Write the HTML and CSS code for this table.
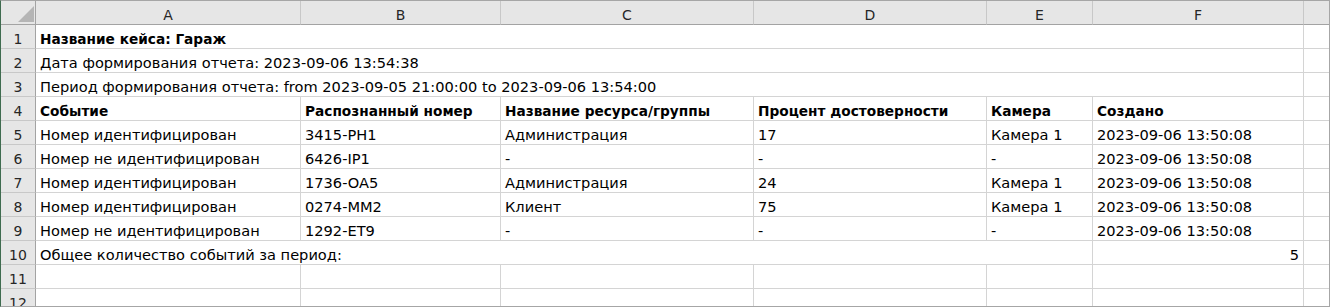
FILE: index.html
```html
<!DOCTYPE html>
<html lang="ru">
<head>
<meta charset="utf-8">
<title>Отчет</title>
<link rel="stylesheet" href="styles.css">
</head>
<body>
<div class="sheet">
  <div class="grid">
    <div class="hd corner"><span class="tri"></span></div>
    <div class="hd col">A</div>
    <div class="hd col">B</div>
    <div class="hd col">C</div>
    <div class="hd col">D</div>
    <div class="hd col">E</div>
    <div class="hd col">F</div>
    <div class="hd col last"></div>

    <div class="rn">1</div>
    <div class="c span6 b">Название кейса: Гараж</div>
    <div class="c last"></div>

    <div class="rn">2</div>
    <div class="c span6">Дата формирования отчета: 2023-09-06 13:54:38</div>
    <div class="c last"></div>

    <div class="rn">3</div>
    <div class="c span6">Период формирования отчета: from 2023-09-05 21:00:00 to 2023-09-06 13:54:00</div>
    <div class="c last"></div>

    <div class="rn">4</div>
    <div class="c b">Событие</div>
    <div class="c b">Распознанный номер</div>
    <div class="c b">Название ресурса/группы</div>
    <div class="c b">Процент достоверности</div>
    <div class="c b">Камера</div>
    <div class="c b">Создано</div>
    <div class="c last"></div>

    <div class="rn">5</div>
    <div class="c">Номер идентифицирован</div>
    <div class="c">3415-PH1</div>
    <div class="c">Администрация</div>
    <div class="c">17</div>
    <div class="c">Камера 1</div>
    <div class="c">2023-09-06 13:50:08</div>
    <div class="c last"></div>

    <div class="rn">6</div>
    <div class="c">Номер не идентифицирован</div>
    <div class="c">6426-IP1</div>
    <div class="c">-</div>
    <div class="c">-</div>
    <div class="c">-</div>
    <div class="c">2023-09-06 13:50:08</div>
    <div class="c last"></div>

    <div class="rn">7</div>
    <div class="c">Номер идентифицирован</div>
    <div class="c">1736-OA5</div>
    <div class="c">Администрация</div>
    <div class="c">24</div>
    <div class="c">Камера 1</div>
    <div class="c">2023-09-06 13:50:08</div>
    <div class="c last"></div>

    <div class="rn">8</div>
    <div class="c">Номер идентифицирован</div>
    <div class="c">0274-MM2</div>
    <div class="c">Клиент</div>
    <div class="c">75</div>
    <div class="c">Камера 1</div>
    <div class="c">2023-09-06 13:50:08</div>
    <div class="c last"></div>

    <div class="rn">9</div>
    <div class="c">Номер не идентифицирован</div>
    <div class="c">1292-ET9</div>
    <div class="c">-</div>
    <div class="c">-</div>
    <div class="c">-</div>
    <div class="c">2023-09-06 13:50:08</div>
    <div class="c last"></div>

    <div class="rn">10</div>
    <div class="c span5">Общее количество событий за период:</div>
    <div class="c num">5</div>
    <div class="c last"></div>

    <div class="rn">11</div>
    <div class="c"></div><div class="c"></div><div class="c"></div>
    <div class="c"></div><div class="c"></div><div class="c"></div>
    <div class="c last"></div>

    <div class="rn">12</div>
    <div class="c"></div><div class="c"></div><div class="c"></div>
    <div class="c"></div><div class="c"></div><div class="c"></div>
    <div class="c last"></div>
  </div>
</div>
</body>
</html>
```

FILE: styles.css
```css
html, body {
  margin: 0;
  padding: 0;
  background: #ffffff;
}

.sheet {
  width: 1330px;
  height: 307px;
  box-sizing: border-box;
  border-top: 1px solid #a6a6a6;
  border-right: 1px solid #a6a6a6;
  border-bottom: 1px solid #a6a6a6;
  border-left: 1px solid #3f6b4f;
  overflow: hidden;
  font-family: "DejaVu Sans", "Liberation Sans", sans-serif;
  font-size: 14px;
  color: #000;
}

.grid {
  display: grid;
  grid-template-columns: 35px 265px 200px 253px 233px 106px 211px 1fr;
  grid-auto-rows: 24px;
}

.grid > div {
  box-sizing: border-box;
  white-space: nowrap;
  overflow: hidden;
}

.hd {
  background: #e6e6e6;
  border-bottom: 1px solid #a3a3a3;
  border-right: 1px solid #c8c8c8;
  color: #262626;
  display: flex;
  align-items: flex-end;
  justify-content: center;
  padding-bottom: 1px;
}

.corner {
  border-right: 1px solid #a3a3a3;
  justify-content: flex-end;
  padding: 0 1px 2px 0;
}

.tri {
  display: block;
  width: 16px;
  height: 16px;
  background: #b5b5b5;
  clip-path: polygon(100% 0, 100% 100%, 0 100%);
}

.hd.last {
  border-right: none;
}

.rn {
  background: #e6e6e6;
  border-right: 1px solid #a3a3a3;
  border-bottom: 1px solid #c8c8c8;
  color: #262626;
  display: flex;
  align-items: flex-end;
  justify-content: center;
  padding-bottom: 1px;
}

.c {
  border-right: 1px solid #d4d4d4;
  border-bottom: 1px solid #d4d4d4;
  padding: 0 4px 1px 4px;
  display: flex;
  align-items: flex-end;
  font-size: 14.6px;
}

.c.last {
  border-right: none;
}

.c.b {
  font-weight: bold;
  font-size: 13.7px;
  padding-bottom: 1.5px;
}

.span6 {
  grid-column: span 6;
}

.span5 {
  grid-column: span 5;
}

.num {
  justify-content: flex-end;
}
```
